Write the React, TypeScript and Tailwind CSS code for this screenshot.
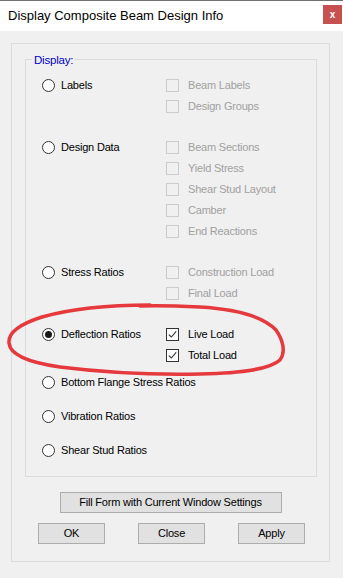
import React from 'react';

type Opt = { label: string; on?: boolean };

const GROUPS: { radio: string; sel?: boolean; enabled?: boolean; opts: Opt[] }[] = [
  { radio: 'Labels', opts: [{ label: 'Beam Labels' }, { label: 'Design Groups' }] },
  {
    radio: 'Design Data',
    opts: [
      { label: 'Beam Sections' },
      { label: 'Yield Stress' },
      { label: 'Shear Stud Layout' },
      { label: 'Camber' },
      { label: 'End Reactions' },
    ],
  },
  { radio: 'Stress Ratios', opts: [{ label: 'Construction Load' }, { label: 'Final Load' }] },
  {
    radio: 'Deflection Ratios',
    sel: true,
    enabled: true,
    opts: [
      { label: 'Live Load', on: true },
      { label: 'Total Load', on: true },
    ],
  },
];

function Radio({ label, sel }: { label: string; sel?: boolean }) {
  return (
    <div className="flex items-center h-[21px] gap-[6px]">
      <span className="w-[13px] h-[13px] rounded-full border border-[#333333] bg-white flex items-center justify-center">
        {sel && <span className="w-[7px] h-[7px] rounded-full bg-[#1a1a1a]" />}
      </span>
      <span className="text-black">{label}</span>
    </div>
  );
}

function Check({ label, on, enabled }: Opt & { enabled?: boolean }) {
  return (
    <div className="flex items-center h-[21px] gap-[9px]">
      <span
        className={
          enabled
            ? 'w-[13px] h-[13px] border border-[#333333] bg-white flex items-center justify-center'
            : 'w-[13px] h-[13px] border border-[#cccccc] bg-[#f0f0f0]'
        }
      >
        {on && (
          <svg width="9" height="9" viewBox="0 0 9 9">
            <path d="M0.8 4.6 L3.3 7 L8.2 1.4" fill="none" stroke="#333" strokeWidth="1.1" />
          </svg>
        )}
      </span>
      <span className={enabled ? 'text-black' : 'text-[#a0a0a0]'}>{label}</span>
    </div>
  );
}

function Btn({ children, w }: { children: React.ReactNode; w: string }) {
  return (
    <div className={`${w} h-[21px] bg-[#e1e1e1] border border-[#adadad] flex items-center justify-center text-black`}>
      {children}
    </div>
  );
}

export default function App() {
  return (
    <div
      className="relative w-[343px] h-[578px] bg-[#f0f0f0] overflow-hidden text-[11px] tracking-[-0.2px]"
      style={{ fontFamily: '"Liberation Sans", Arial, sans-serif' }}
    >
      <div className="h-[31px] bg-white border-t border-[#707070] flex items-center justify-between pl-[8px] pr-[1px]">
        <span className="text-[13px] text-black tracking-normal">Display Composite Beam Design Info</span>
        <div className="w-[19px] h-[19px] mb-[3px] bg-[#c75050] flex items-center justify-center text-white text-[10px] font-bold">
          x
        </div>
      </div>

      <div className="mt-[12px] ml-[11px] w-[319px] h-[519px] border border-[#dcdcdc] flex flex-col">
        <div className="relative mt-[15px] ml-[13px] w-[292px] h-[418px] border border-[#dcdcdc] pt-[15px] pl-[16px]">
          <span className="absolute -top-[8px] left-[6px] px-[2px] bg-[#f0f0f0] text-[#0000c8] text-[11.5px]">Display:</span>

          <div className="flex flex-col gap-[20px]">
            {GROUPS.map((g) => (
              <div key={g.radio} className="grid grid-cols-[124px_1fr]">
                <Radio label={g.radio} sel={g.sel} />
                <div className="flex flex-col">
                  {g.opts.map((o) => (
                    <Check key={o.label} {...o} enabled={g.enabled} />
                  ))}
                </div>
              </div>
            ))}
          </div>
          <div className="mt-[6px] flex flex-col gap-[13px]">
            <Radio label="Bottom Flange Stress Ratios" />
            <Radio label="Vibration Ratios" />
            <Radio label="Shear Stud Ratios" />
          </div>
        </div>

        <div className="mt-[15px] flex justify-center">
          <Btn w="w-[222px]">Fill Form with Current Window Settings</Btn>
        </div>
        <div className="mt-[10px] ml-[26px] flex gap-[33px]">
          <Btn w="w-[67px]">OK</Btn>
          <Btn w="w-[67px]">Close</Btn>
          <Btn w="w-[67px]">Apply</Btn>
        </div>
      </div>

      <svg className="absolute left-0 top-0 pointer-events-none" width="343" height="578" viewBox="0 0 343 578">
        <path
          d="M150 305 C110 305 70 309 42 317 C20 324 8 333 9 343 C10 354 25 362 60 367 C100 372 150 375 200 374 C245 373 270 369 280 360 C286 352 283 340 276 330 C262 316 235 309 200 307 C180 306 160 305 140 306"
          fill="none"
          stroke="#e5393d"
          strokeWidth="3.5"
          strokeLinecap="round"
        />
      </svg>
    </div>
  );
}
